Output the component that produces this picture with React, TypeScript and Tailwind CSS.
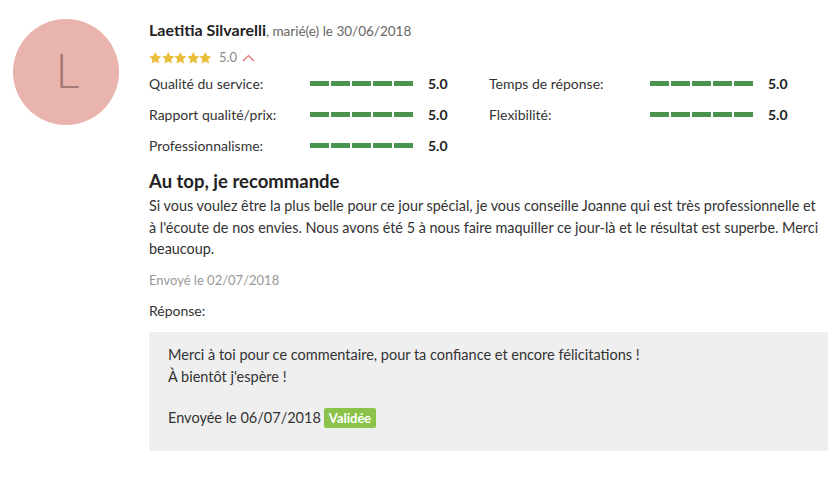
import React from 'react';

// 평점 항목
const ratingsLeft = [
  { label: 'Qualité du service:', value: '5.0' },
  { label: 'Rapport qualité/prix:', value: '5.0' },
  { label: 'Professionnalisme:', value: '5.0' },
];
const ratingsRight = [
  { label: 'Temps de réponse:', value: '5.0' },
  { label: 'Flexibilité:', value: '5.0' },
];

const Star = () => (
  <svg width="12.6" height="12" viewBox="0 0 24 23" className="fill-[#ebbd3c]">
    <path d="M12 0l3.5 7.3 8 1.1-5.8 5.6 1.4 8L12 18.2 4.9 22l1.4-8L.5 8.4l8-1.1z" />
  </svg>
);

const Bars = () => (
  <div className="flex gap-[2px]">
    {Array.from({ length: 5 }).map((_, i) => (
      <div key={i} className="w-[19px] h-[5px] bg-[#4a9450]" />
    ))}
  </div>
);

const RatingRow = ({ label, value }: { label: string; value: string }) => (
  <div className="flex items-center h-[31px]">
    <div className="w-[161px] text-[14px] text-[#333]">{label}</div>
    <Bars />
    <div className="ml-[15px] text-[14px] font-bold text-[#222]">{value}</div>
  </div>
);

const App = () => {
  return (
    <div className="w-[838px] h-[477px] bg-white flex font-['Lato',sans-serif] text-[#333]">
      {/* 아바타 */}
      <div className="ml-[13px] mt-[19px] w-[106px] h-[106px] rounded-full bg-[#e9b4ae] flex items-center justify-center shrink-0">
        <span className="text-[47px] font-light text-[#a57976] leading-none ml-[3px] -mt-[3px]">L</span>
      </div>

      {/* 본문 */}
      <div className="ml-[30px] mt-[20px] w-[679px]">
        <div className="text-[16px] leading-[20px] whitespace-nowrap">
          <span className="font-bold text-[#222]">Laetitia Silvarelli</span>
          <span className="text-[13.5px] text-[#666]">, marié(e) le 30/06/2018</span>
        </div>

        <div className="flex items-center mt-[10px] h-[14px]">
          <div className="flex">
            {Array.from({ length: 5 }).map((_, i) => <Star key={i} />)}
          </div>
          <span className="ml-[7px] text-[13px] text-[#888]">5.0</span>
          <svg width="13" height="8" viewBox="0 0 13 8" className="ml-[5px]">
            <path d="M1 7l5.5-5.5L12 7" fill="none" stroke="#e06a6a" strokeWidth="1.2" />
          </svg>
        </div>

        <div className="flex mt-[3px]">
          <div className="w-[340px]">
            {ratingsLeft.map(r => <RatingRow key={r.label} {...r} />)}
          </div>
          <div>
            {ratingsRight.map(r => <RatingRow key={r.label} {...r} />)}
          </div>
        </div>

        <h3 className="mt-[8px] text-[18.5px] font-bold text-[#222] leading-[24px]">Au top, je recommande</h3>
        <p className="mt-[2px] w-[673px] text-[14.4px] leading-[21.5px] text-[#333]">
          Si vous voulez être la plus belle pour ce jour spécial, je vous conseille Joanne qui est très professionnelle et à l'écoute de nos envies. Nous avons été 5 à nous faire maquiller ce jour-là et le résultat est superbe. Merci beaucoup.
        </p>

        <div className="mt-[10px] text-[13px] leading-[20px] text-[#999]">Envoyé le 02/07/2018</div>
        <div className="mt-[11px] text-[14px] leading-[20px] text-[#333]">Réponse:</div>

        <div className="mt-[11px] bg-[#efefef] h-[119px] pl-[19px] pt-[12px] text-[14.5px] text-[#333] leading-[22px]">
          <div>Merci à toi pour ce commentaire, pour ta confiance et encore félicitations !</div>
          <div>À bientôt j'espère !</div>
          <div className="flex items-center mt-[19px] h-[22px]">
            <span>Envoyée le 06/07/2018</span>
            <span className="ml-[3px] bg-[#8bc34a] text-white text-[13px] font-bold rounded-[2px] px-[5px] leading-[20px]">Validée</span>
          </div>
        </div>
      </div>
    </div>
  );
};

export default App;
